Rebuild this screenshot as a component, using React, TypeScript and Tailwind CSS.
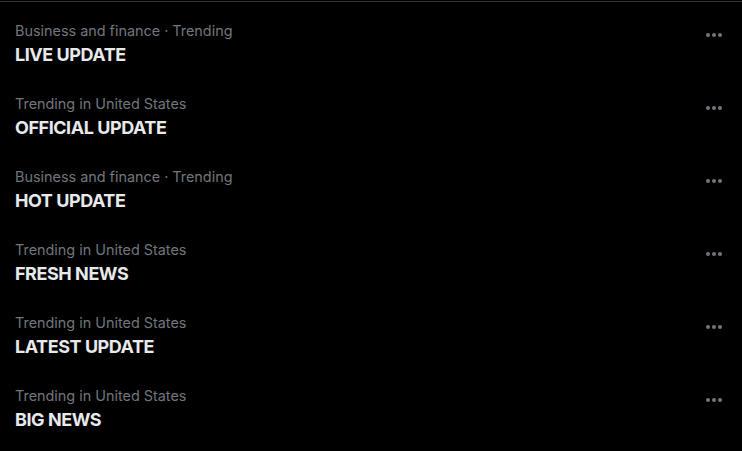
import React from "react";

const items = [
  { sub: "Business and finance · Trending", title: "LIVE UPDATE" },
  { sub: "Trending in United States", title: "OFFICIAL UPDATE" },
  { sub: "Business and finance · Trending", title: "HOT UPDATE" },
  { sub: "Trending in United States", title: "FRESH NEWS" },
  { sub: "Trending in United States", title: "LATEST UPDATE" },
  { sub: "Trending in United States", title: "BIG NEWS" },
];

function Dots() {
  return (
    <svg width="20" height="20" viewBox="0 0 20 20" className="text-[#71767b]">
      <circle cx="4" cy="10" r="2" fill="currentColor" />
      <circle cx="10" cy="10" r="2" fill="currentColor" />
      <circle cx="16" cy="10" r="2" fill="currentColor" />
    </svg>
  );
}

export default function App() {
  return (
    <div className="w-[742px] h-[451px] bg-black overflow-hidden" style={{ fontFamily: "Inter, 'Noto Sans', sans-serif" }}>
      <div className="h-px bg-black" />
      <div className="border-t border-[#2f3336]">
        {items.map((it, i) => (
          <div key={i} className="flex justify-between h-[73px] pl-[15px] pr-[18px] pt-[19px]">
            <div className="flex flex-col">
              <span className="text-[14.4px] leading-[20px] text-[#71767b]">{it.sub}</span>
              <span className="text-[18px] leading-[24px] mt-[2px] font-bold text-[#e7e9ea] tracking-[-0.45px]">{it.title}</span>
            </div>
            <div className="pt-[4px]">
              <Dots />
            </div>
          </div>
        ))}
      </div>
    </div>
  );
}
